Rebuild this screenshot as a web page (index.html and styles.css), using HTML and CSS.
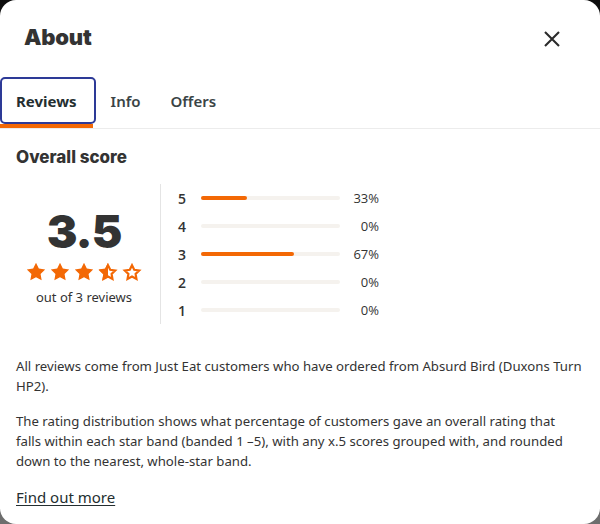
FILE: index.html
```html
<!DOCTYPE html>
<html lang="en">
<head>
<meta charset="utf-8">
<title>About</title>
<link rel="stylesheet" href="styles.css">
</head>
<body>
<div class="modal">
  <header class="header">
    <h1 class="title">About</h1>
    <button class="close" aria-label="Close">
      <svg width="16" height="16" viewBox="0 0 16 16"><path d="M1 1L15 15M15 1L1 15" stroke="#2b2b2b" stroke-width="2.1" fill="none"/></svg>
    </button>
  </header>
  <nav class="tabs">
    <div class="tab active"><span class="tab-label">Reviews</span><span class="tab-bar"></span></div>
    <div class="tab"><span class="tab-label">Info</span><span class="tab-bar"></span></div>
    <div class="tab"><span class="tab-label">Offers</span><span class="tab-bar"></span></div>
  </nav>
  <main class="content">
    <h2 class="subtitle">Overall score</h2>
    <section class="score">
      <div class="summary">
        <div class="big">3.5</div>
        <div class="stars">
          <svg class="star" viewBox="0 0 24 24"><path class="full" d="M12 2l3.09 6.26L22 9.27l-5 4.87 1.18 6.88L12 17.77l-6.18 3.25L7 14.14 2 9.27l6.91-1.01L12 2z"/></svg>
          <svg class="star" viewBox="0 0 24 24"><path class="full" d="M12 2l3.09 6.26L22 9.27l-5 4.87 1.18 6.88L12 17.77l-6.18 3.25L7 14.14 2 9.27l6.91-1.01L12 2z"/></svg>
          <svg class="star" viewBox="0 0 24 24"><path class="full" d="M12 2l3.09 6.26L22 9.27l-5 4.87 1.18 6.88L12 17.77l-6.18 3.25L7 14.14 2 9.27l6.91-1.01L12 2z"/></svg>
          <svg class="star" viewBox="0 0 24 24"><path class="empty" d="M12 4.6l2.43 4.93 5.44.79-3.94 3.84.93 5.42L12 17.02l-4.86 2.56.93-5.42-3.940-3.84 5.44-.79L12 4.6z"/><path class="full" d="M12 2L8.91 8.26 2 9.27l5 4.87-1.18 6.88L12 17.77z"/></svg>
          <svg class="star" viewBox="0 0 24 24"><path class="empty" d="M12 4.6l2.43 4.93 5.44.79-3.94 3.84.93 5.42L12 17.02l-4.86 2.56.93-5.42-3.94-3.84 5.44-.79L12 4.6z"/></svg>
        </div>
        <div class="count">out of 3 reviews</div>
      </div>
      <div class="dist">
        <div class="row"><span class="num">5</span><span class="bar"><span class="fill" style="width:33%"></span></span><span class="pct">33%</span></div>
        <div class="row"><span class="num">4</span><span class="bar"><span class="fill" style="width:0%"></span></span><span class="pct">0%</span></div>
        <div class="row"><span class="num">3</span><span class="bar"><span class="fill" style="width:67%"></span></span><span class="pct">67%</span></div>
        <div class="row"><span class="num">2</span><span class="bar"><span class="fill" style="width:0%"></span></span><span class="pct">0%</span></div>
        <div class="row"><span class="num">1</span><span class="bar"><span class="fill" style="width:0%"></span></span><span class="pct">0%</span></div>
      </div>
    </section>
    <p class="text">All reviews come from Just Eat customers who have ordered from Absurd Bird (Duxons Turn HP2).</p>
    <p class="text text-narrow">The rating distribution shows what percentage of customers gave an overall rating that falls within each star band (banded 1 &ndash;5), with any x.5 scores grouped with, and rounded down to the nearest, whole-star band.</p>
    <a class="more" href="#">Find out more</a>
  </main>
</div>
</body>
</html>
```
FILE: styles.css
```css
* { box-sizing: border-box; }
html, body { margin: 0; height: 100%; }
body {
  background: linear-gradient(#0d0d0d, #6e6e6e);
  font-family: "Noto Sans", "Open Sans", sans-serif;
  color: #333;
}
.modal {
  background: #fff;
  height: 524px;
  border-radius: 16px;
  overflow: hidden;
}
.header {
  display: flex;
  justify-content: space-between;
  align-items: center;
  height: 77px;
  padding: 0 40px 0 24px;
}
.title {
  margin: 0;
  font-family: Inter, "Noto Sans", sans-serif;
  font-weight: 900;
  font-size: 22px;
  color: #333;
  letter-spacing: -0.2px;
  padding-bottom: 4px;
}
.close {
  border: 0;
  background: none;
  padding: 0;
  width: 16px;
  height: 16px;
  display: flex;
}
.tabs {
  display: flex;
  border-bottom: 1px solid #ececec;
}
.tab {
  display: flex;
  flex-direction: column;
}
.tab-label {
  height: 47px;
  display: flex;
  align-items: center;
  padding: 0 15px;
  font-size: 15px;
  font-weight: 600;
  color: #3a4446;
}
.tab.active .tab-label {
  border: 2px solid #2d3a97;
  border-radius: 5px;
  padding: 0 17px 0 14px;
  color: #242e30;
  font-weight: 700;
}
.tab-bar { height: 4px; }
.tab.active .tab-bar {
  background: #f36805;
  margin-right: 3px;
}
.content { padding: 16px 16px 0; }
.subtitle {
  margin: 0 0 15px;
  font-family: Inter, "Noto Sans", sans-serif;
  font-weight: 800;
  font-size: 17px;
  color: #333;
  line-height: 24px;
}
.score {
  display: flex;
  height: 140px;
  margin-bottom: 32px;
}
.summary {
  width: 136px;
  margin-right: 8px;
  display: flex;
  flex-direction: column;
  align-items: center;
  justify-content: center;
  padding-top: 4px;
}
.big {
  font-family: Inter, "Noto Sans", sans-serif;
  font-weight: 900;
  font-size: 46px;
  line-height: 50px;
  color: #333;
  letter-spacing: -1px;
}
.stars {
  display: flex;
  gap: 2px;
  margin-top: 5px;
}
.star { width: 22px; height: 22px; display: block; }
.star .full { fill: #f36805; }
.star .empty { fill: none; stroke: #f36805; stroke-width: 2.4; }
.count {
  font-size: 13px;
  margin-top: 5px;
  color: #333;
}
.dist {
  border-left: 1px solid #e4e4e4;
  padding-left: 17px;
  display: flex;
  flex-direction: column;
}
.row {
  height: 28px;
  display: flex;
  align-items: center;
}
.num {
  width: 23px;
  font-family: "Open Sans", sans-serif;
  font-weight: 600;
  font-size: 14px;
  color: #333;
}
.bar {
  width: 139px;
  height: 4px;
  border-radius: 2px;
  background: #f5f2ee;
  display: block;
}
.fill {
  display: block;
  height: 4px;
  border-radius: 2px;
  background: #f36805;
}
.pct {
  width: 39px;
  text-align: right;
  font-family: "Open Sans", sans-serif;
  font-size: 13px;
  color: #333;
}
.text {
  margin: 0 0 15px;
  font-size: 13.2px;
  line-height: 20px;
  color: #333;
}
.text-narrow { max-width: 560px; }
.more {
  display: inline-block;
  font-size: 15px;
  color: #242e30;
  text-decoration: underline;
  text-underline-offset: 2px;
}
```
